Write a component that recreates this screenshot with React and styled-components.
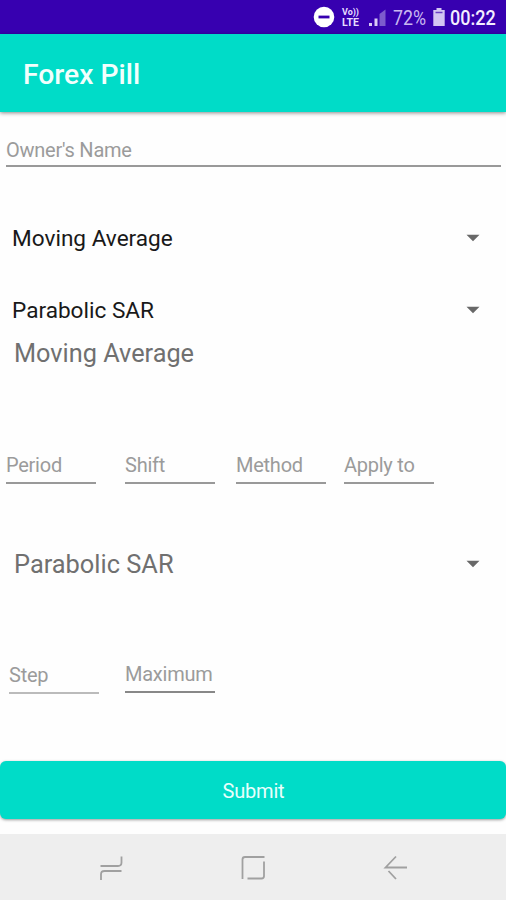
import React from 'react';
import styled, { createGlobalStyle } from 'styled-components';

const GlobalStyle = createGlobalStyle`
  body {
    margin: 0;
    background-color: #fefefe;
    font-family: Roboto, 'Liberation Sans', sans-serif;
  }
`;

const Screen = styled.div`
  width: 506px;
  height: 900px;
  display: flex;
  flex-direction: column;
  overflow: hidden;
`;

const StatusBar = styled.div`
  height: 34px;
  flex-shrink: 0;
  display: flex;
  align-items: center;
  justify-content: flex-end;
  box-sizing: border-box;
  padding: 2px 10px 0 0;
  background-color: #3700b0;
`;

const StatusIcons = styled.svg`
  display: block;
  width: 78px;
  height: 24px;
  margin-right: 6px;
  overflow: visible;
`;

const Battery = styled.svg`
  display: block;
  width: 12px;
  height: 20px;
  margin: -2px 5px 0 6px;
`;

const StatusText = styled.span`
  width: ${(props) => props.$width}px;
  font-size: 20.5px;
  line-height: 24px;
  font-weight: ${(props) => props.$weight || 400};
  color: ${(props) => props.$color};
  white-space: nowrap;
  transform: scaleX(${(props) => props.$stretch});
  transform-origin: left;
`;

const AppBar = styled.header`
  height: 78px;
  flex-shrink: 0;
  display: flex;
  align-items: center;
  padding: 4px 23px 0;
  box-sizing: border-box;
  background-color: #00dcc8;
  box-shadow: 0 1px 4px #0007;
`;

const Title = styled.h1`
  margin: 0;
  font-size: 28.3px;
  line-height: 36px;
  font-weight: 500;
  color: #f2fffd;
`;

const Form = styled.main`
  flex: 1;
  display: flex;
  flex-direction: column;
`;

const Field = styled.div`
  width: ${(props) => props.$width}px;
  height: ${(props) => props.$height || 31}px;
  box-sizing: border-box;
  margin: ${(props) => props.$margin || 0};
  border-bottom: 2px solid ${(props) => props.$line || '#999'};
  font-size: 20px;
  line-height: 24px;
  letter-spacing: -0.25px;
  color: #9b9b9b;
  white-space: nowrap;
`;

const FieldRow = styled.div`
  display: flex;
  align-items: flex-start;
  margin: ${(props) => props.$margin};
`;

const Select = styled.div`
  height: 36px;
  display: flex;
  align-items: center;
  justify-content: space-between;
  margin: ${(props) => props.$margin};
  padding: 0 26px 0 ${(props) => (props.$large ? 14 : 12)}px;
  font-size: ${(props) => (props.$large ? 25.4 : 22.6)}px;
  color: ${(props) => (props.$large ? '#707070' : '#191919')};
`;

const Heading = styled.div`
  height: 36px;
  margin-top: 8px;
  padding-left: 14px;
  font-size: 25.3px;
  line-height: 36px;
  color: #707070;
`;

const Caret = styled.svg`
  display: block;
  width: 14px;
  height: 8px;
`;

const SubmitButton = styled.button`
  width: 100%;
  height: 58px;
  margin-top: 67px;
  padding: 1px 0 0 1px;
  border: 0;
  border-radius: 6px;
  background-color: #00dcc8;
  box-shadow: 0 1px 3px #0006;
  font-family: inherit;
  font-size: 20px;
  letter-spacing: -0.2px;
  color: #e8fffc;
`;

const NavBar = styled.nav`
  height: 66px;
  flex-shrink: 0;
  display: flex;
  align-items: center;
  justify-content: space-between;
  box-sizing: border-box;
  padding: 2px 98px 0 98px;
  background-color: #eee;
`;

const NavIcon = styled.svg`
  display: block;
  width: 26px;
  height: 26px;
  fill: none;
  stroke: #a0a0a0;
  stroke-width: 1.8;
`;

const Spinner = ({ label, ...rest }) => (
  <Select {...rest}>
    <span>{label}</span>
    <Caret viewBox='0 0 14 8'>
      <path d='M0.5 0.8H13.5L7 7.3Z' fill='#686868' />
    </Caret>
  </Select>
);

const App = () => {
  return (
    <Screen>
      <GlobalStyle />
      <StatusBar>
        <StatusIcons viewBox='0 0 78 24'>
          <circle cx='15' cy='11' r='10.3' fill='#fff' />
          <path d='M9.5 11h11' stroke='#3700b0' strokeWidth='2.8' />
          <text
            x='33'
            y='8.8'
            fontSize='9'
            fontWeight='700'
            fill='#e6dcff'
            textLength='17'
            lengthAdjust='spacingAndGlyphs'
          >
            Vo))
          </text>
          <text
            x='33'
            y='20'
            fontSize='10'
            fontWeight='700'
            fill='#e6dcff'
            textLength='17'
            lengthAdjust='spacingAndGlyphs'
          >
            LTE
          </text>
          <path d='M60 17h3v3h-3zM65.5 12.5h3V20h-3z' fill='#d9ccf5' />
          <path d='M70.5 8L76.5 3.5V20h-6z' fill='#7c5bcd' />
        </StatusIcons>
        <StatusText $width={34} $color='#c9b8f0' $stretch={0.87}>
          72%
        </StatusText>
        <Battery viewBox='0 0 12 20'>
          <path d='M3.5 1h5v2h3.2v16H.3V3h3.2z' fill='#d3c5f2' />
          <path d='M2.5 5.5h7' stroke='#6a40c4' strokeWidth='1.5' />
        </Battery>
        <StatusText $width={46} $color='#f3edff' $weight={500} $stretch={0.88}>
          00:22
        </StatusText>
      </StatusBar>
      <AppBar>
        <Title>Forex Pill</Title>
      </AppBar>
      <Form>
        <Field $width={495} $height={29} $margin='26px 0 0 6px'>
          Owner's Name
        </Field>
        <Spinner label='Moving Average' $margin='53px 0 0' />
        <Spinner label='Parabolic SAR' $margin='36px 0 0' />
        <Heading>Moving Average</Heading>
        <FieldRow $margin='81px 0 0 6px'>
          <Field $width={90}>Period</Field>
          <Field $width={90} $margin='0 0 0 29px'>
            Shift
          </Field>
          <Field $width={90} $margin='0 0 0 21px'>
            Method
          </Field>
          <Field $width={90} $margin='0 0 0 18px'>
            Apply to
          </Field>
        </FieldRow>
        <Spinner $large label='Parabolic SAR' $margin='62px 0 0' />
        <FieldRow $margin='80px 0 0 9px'>
          <Field $width={90} $margin='1px 0 0' $line='#bbb'>
            Step
          </Field>
          <Field $width={90} $margin='0 0 0 26px' $line='#888'>
            Maximum
          </Field>
        </FieldRow>
        <SubmitButton>Submit</SubmitButton>
      </Form>
      <NavBar>
        <NavIcon viewBox='0.5 0.5 26 26'>
          <path d='M3 11.5H20.5Q24 11.5 24 8V2M24 16.5H7Q3.5 16.5 3.5 20V25.5' />
        </NavIcon>
        <NavIcon viewBox='0.5 0.5 26 26'>
          <path d='M25 2.5H5.5Q3 2.5 3 5V24.5M8 24H22Q24.500 24 24.5 21.5V7' />
        </NavIcon>
        <NavIcon viewBox='0 0.5 26 26'>
          <path d='M14 2L3.5 13H25M6.500 16.5L14 24.5' />
        </NavIcon>
      </NavBar>
    </Screen>
  );
};

export default App;
